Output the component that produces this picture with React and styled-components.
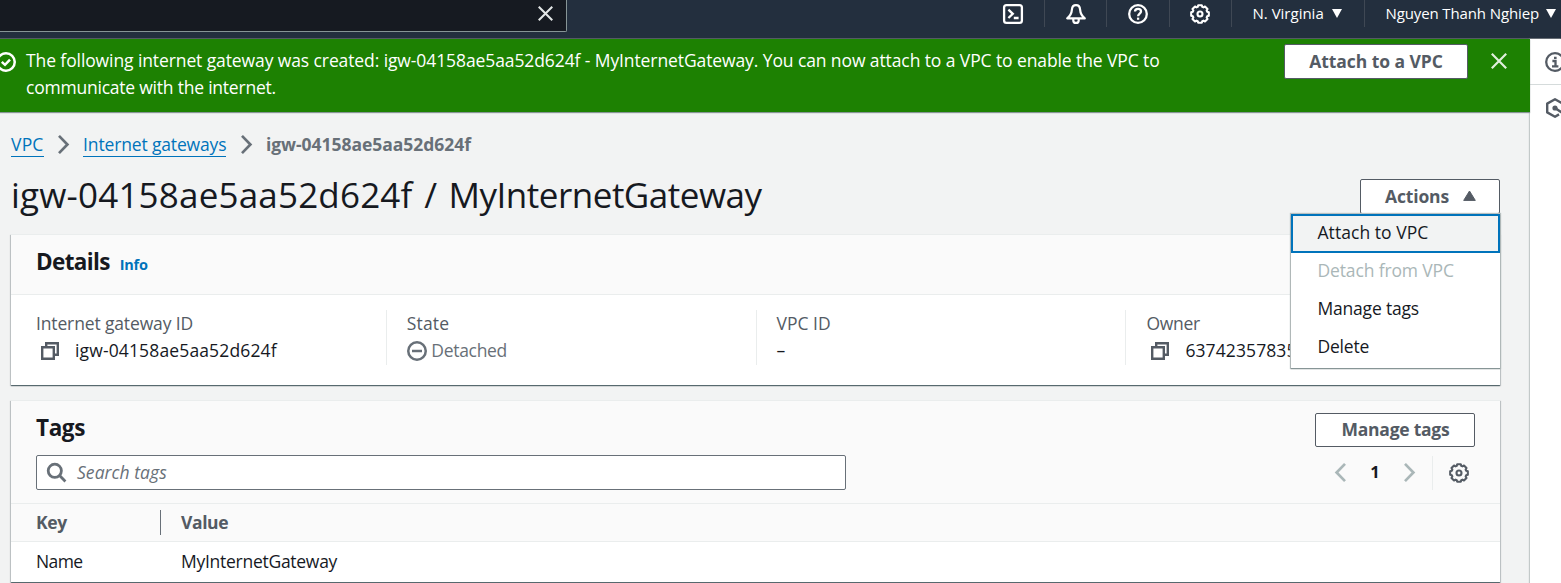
import React from "react";
import styled, { createGlobalStyle } from "styled-components";

const ink = "#16191f";
const muted = "#545b64";
const soft = "#687078";
const line = "#eaeded";
const link = "#0073bb";

const GlobalStyle = createGlobalStyle`
  * { box-sizing: border-box; }
  body {
    margin: 0;
    overflow: hidden;
    background: #f2f3f3;
    color: ${ink};
    font: 400 17.5px/27.5px "Open Sans", "Noto Sans", sans-serif;
  }
  button { font: inherit; margin: 0; cursor: pointer; }
  svg { display: block; flex: none; overflow: visible; }
`;

/* letter-spacing tuned per label */
const Text = styled.span`
  letter-spacing: ${(p) => p.$track || 0}px;
  white-space: nowrap;
`;

/* ---------- icons ---------- */

const gearOutline = (() => {
  const pts = [];
  const teeth = 8;
  for (let i = 0; i < teeth; i++) {
    const base = (i * 2 * Math.PI) / teeth - Math.PI / 2;
    [[-0.2, 9], [0.2, 9], [0.31, 7.5], [0.475, 7.5]].forEach(([a, r]) => {
      pts.push(`${(10 + r * Math.cos(base + a)).toFixed(2)} ${(10 + r * Math.sin(base + a)).toFixed(2)}`);
    });
  }
  return `M${pts.join("L")}Z`;
})();

const Svg = ({ size = 20, w = 2.5, children, ...rest }) => (
  <svg width={size} height={size} viewBox="0 0 20 20" fill="none" stroke="currentColor" strokeWidth={w} {...rest}>
    {children}
  </svg>
);
const GearIcon = () => (
  <Svg w={2.1} strokeLinejoin="round">
    <path d={gearOutline} />
    <circle cx="10" cy="10" r="2.5" />
  </Svg>
);
const ShellIcon = () => (
  <Svg w={2.3}>
    <rect x="1.1" y="1.1" width="17.8" height="17.8" rx="2.4" />
    <path d="M5.4 5.6L9.8 9.8L5.4 14M10.8 14H15.6" />
  </Svg>
);
const BellIcon = () => (
  <Svg w={2.2} strokeLinejoin="round">
    <path d="M10 1.2C7.6 1.2 6.1 3 5.9 5.6C5.6 9.6 4.2 12 1.2 14.4H18.8C15.8 12 14.4 9.6 14.1 5.6C13.9 3 12.4 1.2 10 1.2Z" />
    <path d="M7.3 15V16.4C7.3 18 8.4 18.9 10 18.9S12.7 18 12.7 16.4V15" />
  </Svg>
);
const HelpIcon = () => (
  <Svg w={2.3}>
    <circle cx="10" cy="10" r="8.8" />
    <path d="M7 7.6C7 5.8 8.3 4.9 10 4.9S13 5.9 13 7.4C13 9.5 10.1 9.6 10.1 12.2" />
    <path d="M10.1 13.6V15.8" />
  </Svg>
);
const CloseIcon = ({ size = 16 }) => (
  <svg width={size} height={size} viewBox="0 0 16 16" fill="none" stroke="currentColor" strokeWidth="2.2">
    <path d="M.8 .8L15.2 15.2M15.2 .8L.8 15.2" />
  </svg>
);
const CheckCircleIcon = () => (
  <Svg>
    <circle cx="10" cy="10" r="8.75" />
    <path d="M5.8 9.8L9 12.8L14 7.6" />
  </Svg>
);
const MinusCircleIcon = () => (
  <Svg w={2.5}>
    <circle cx="10" cy="10" r="8.75" />
    <path d="M5 10H15" />
  </Svg>
);
const CopyIcon = () => (
  <svg width="18" height="18" viewBox="0 0 18 18" fill="none" stroke="currentColor" strokeWidth="2.4">
    <path d="M1.2 5.2H12.8V16.8H1.2Z" />
    <path d="M5.2 5V1.2H16.8V12.8H13" />
  </svg>
);
const Chevron = ({ flip }) => (
  <svg width="11" height="19" viewBox="0 0 11 19" fill="none" stroke="currentColor" strokeWidth="2.7">
    <path d={flip ? "M10 .9L1.6 9.5L10 18.1" : "M1 .9L9.4 9.5L1 18.1"} />
  </svg>
);
const SearchIcon = () => (
  <Svg w={2.8}>
    <circle cx="7.8" cy="7.8" r="6.6" />
    <path d="M12.6 12.6L18.4 18.4" />
  </Svg>
);
const InfoIcon = () => (
  <Svg w={2.3}>
    <circle cx="10" cy="10" r="8.8" />
    <path d="M9 5.9H11.6M7.4 9H10.5V14.6M7 14.4H13.4" />
  </Svg>
);
const HexIcon = () => (
  <Svg w={2.4} strokeLinejoin="round">
    <path d="M17.6 12V5.6L10 1.3L2.2 5.6V14.4L10 18.7L14 16.4" />
    <circle cx="10" cy="10" r="1.4" fill="currentColor" />
    <path d="M10 10L17 14.6" />
  </Svg>
);
const DownTriangle = () => (
  <svg width="10" height="9" viewBox="0 0 10 9" fill="currentColor"><path d="M0 0H10L5 9Z" /></svg>
);
const UpTriangle = () => (
  <svg width="13" height="11" viewBox="0 0 13 11" fill="currentColor" stroke="currentColor" strokeLinejoin="round"><path d="M6.5 1L12.3 10.4H.7Z" /></svg>
);

/* ---------- top navigation ---------- */

const TopNav = styled.header`
  display: flex;
  align-items: flex-start;
  justify-content: space-between;
  height: 39px;
  background: #232f3e;
  border-bottom: 1px solid #545b64;
  color: #fff;
`;
const NavSearch = styled.div`
  display: flex;
  justify-content: flex-end;
  width: 567px;
  height: 32px;
  padding: 6px 13px 0 0;
  background: #161a21;
  border: solid #879596;
  border-width: 0 1px 1px 0;
  border-radius: 0 0 2px 0;
  color: #e3e6e6;
`;
const NavItems = styled.div`
  display: flex;
  height: 27px;
  font-size: 15px;
  font-weight: 500;
`;
const NavCell = styled.div`
  display: flex;
  align-items: center;
  justify-content: ${(p) => (p.$icon ? "center" : "flex-start")};
  gap: ${(p) => (p.$last ? 7 : 8)}px;
  width: ${(p) => p.$w}px;
  padding-left: ${(p) => (p.$icon ? 0 : 20.5)}px;
  border-right: ${(p) => (p.$last ? 0 : 1)}px solid #3f4854;
  white-space: nowrap;
`;

/* ---------- page frame ---------- */

const Frame = styled.div`
  display: grid;
  grid-template-columns: 1530px 31px;
  height: 544px;
`;
const Main = styled.main`
  min-width: 0;
  height: 544px;
  background: #f2f3f3;
`;
const SidePanel = styled.aside`
  height: 544px;
  overflow: hidden;
  background: #fff;
  box-shadow: -1px 0 1px #c3c9c9;
  color: ${muted};
`;
const SideTool = styled.div`
  display: flex;
  align-items: center;
  height: 46px;
  padding-left: 15px;
  border-bottom: ${(p) => (p.$ruled ? 1 : 0)}px solid #d5dbdb;
`;

const Banner = styled.div`
  display: flex;
  align-items: flex-start;
  position: relative;
  height: 73px;
  background: #1d8102;
  box-shadow: 0 1px 1px #879596;
  color: #fff;
  font-weight: 500;
`;
const BannerIcon = styled.div`
  margin: 13px 10px 0 -4px;
`;
const BannerText = styled.div`
  display: flex;
  flex-direction: column;
  width: 1257.5px;
  padding-top: 8px;
  line-height: 27px;
`;
const BannerClose = styled.div`
  margin: 14px 0 0 23.5px;
  color: #e0efdc;
`;

const Button = styled.button`
  display: flex;
  align-items: center;
  justify-content: center;
  gap: 14px;
  width: ${(p) => p.$w}px;
  height: ${(p) => p.$h || 34}px;
  margin-top: ${(p) => p.$mt || 0}px;
  padding: 0 0 2px 1px;
  background: #fff;
  border: 1px solid ${muted};
  border-radius: 2px;
  color: ${muted};
  font-weight: 700;
  line-height: 20px;
`;

const Content = styled.div`
  padding: 19px 30px 0 11px;
`;
const Breadcrumbs = styled.nav`
  display: flex;
  align-items: center;
  height: 27px;
  color: ${soft};
`;
const Crumb = styled.a`
  height: 25px;
  margin-bottom: 1px;
  line-height: 25px;
  border-bottom: 1px solid ${link};
  color: ${link};
`;
const CrumbGap = styled.span`
  display: flex;
  justify-content: center;
  width: 39.5px;
`;
const TitleRow = styled.div`
  display: flex;
  justify-content: space-between;
  height: 76px;
  padding-top: 21px;
`;
const Title = styled.h1`
  margin: -6px 0 0;
  font-size: 35px;
  font-weight: 400;
  line-height: 44px;
  word-spacing: 2.5px;
  white-space: pre;
`;

const ActionsWrap = styled.div`
  position: relative;
`;
const Menu = styled.div`
  position: absolute;
  z-index: 2;
  top: 35px;
  right: 0;
  width: 209px;
  height: 154px;
  background: #fff;
  box-shadow: 0 1px 1px #879596, 0 0 1px 1px #b9c0c0;
`;
const MenuItem = styled.div`
  display: flex;
  align-items: center;
  height: ${(p) => (p.$active ? 39 : 38)}px;
  margin-bottom: ${(p) => (p.$active ? -1 : 0)}px;
  padding: ${(p) => (p.$active ? "0 0 1px 24.5px" : "0 0 0 26.5px")};
  background: ${(p) => (p.$active ? "#f2f3f3" : "transparent")};
  border: ${(p) => (p.$active ? `2px solid ${link}` : 0)};
  color: ${(p) => (p.$disabled ? "#aab7b8" : ink)};
`;

const Card = styled.section`
  width: 1489px;
  background: #fff;
  border-top: 1px solid ${line};
  box-shadow: 0 1px 1px 0 rgba(0, 28, 36, 0.5), 1px 1px 1px 0 rgba(0, 28, 36, 0.15),
    -1px 1px 1px 0 rgba(0, 28, 36, 0.15);
`;
const CardHeader = styled.div`
  display: flex;
  align-items: baseline;
  gap: 10px;
  height: 60px;
  padding: 13px 25px 0;
  background: #fafafa;
  border-bottom: 1px solid ${line};
`;
const Heading = styled.h2`
  margin: ${(p) => p.$mt || 0}px 0 0;
  font-size: 22.5px;
  font-weight: 700;
  line-height: 28px;
`;
const InfoLink = styled.a`
  color: ${link};
  font-size: 14.5px;
  font-weight: 700;
`;
const Fields = styled.div`
  display: grid;
  grid-template-columns: repeat(4, 369.8px);
  height: 90px;
  padding: 15px 0 20px 5px;
  overflow: hidden;
`;
const Field = styled.div`
  padding-left: ${(p) => (p.$first ? 19 : 20)}px;
  border-left: 1px solid ${(p) => (p.$first ? "transparent" : line)};
`;
const FieldLabel = styled.div`
  color: ${muted};
`;
const FieldValue = styled.div`
  display: flex;
  align-items: center;
  gap: ${(p) => (p.$copy ? 16 : 4.5)}px;
  height: 27px;
  padding-left: ${(p) => (p.$copy ? 5 : 0)}px;
  color: ${(p) => (p.$muted ? soft : ink)};
`;
const CopySlot = styled.span`
  color: ${muted};
`;

const TagsTop = styled.div`
  display: flex;
  justify-content: space-between;
  height: 54px;
  padding: 12px 25px 0;
  background: #fafafa;
`;
const TagsTools = styled.div`
  display: flex;
  justify-content: space-between;
  height: 49px;
  padding: 0 31px 0 25px;
  background: #fafafa;
  border-bottom: 1px solid ${line};
`;
const SearchBox = styled.div`
  display: flex;
  align-items: center;
  gap: 10px;
  width: 810px;
  height: 35px;
  padding-left: 10px;
  background: #fff;
  border: 1px solid ${soft};
  border-radius: 2px;
  color: ${soft};
  font-style: italic;
`;
const Pager = styled.div`
  display: flex;
  align-items: center;
  height: 35px;
  color: #aab7b8;
`;
const PageNumber = styled.span`
  width: 58px;
  padding-bottom: 2px;
  color: ${ink};
  font-size: 16.5px;
  font-weight: 700;
  text-align: center;
`;
const PagerSettings = styled.div`
  display: flex;
  align-items: center;
  height: 34px;
  margin-left: 17px;
  padding-left: 16px;
  border-left: 1px solid ${line};
  color: ${muted};
`;
const TableRow = styled.div`
  display: grid;
  grid-template-columns: 150px 1fr;
  align-items: center;
  height: ${(p) => (p.$head ? 38 : 40)}px;
  padding-bottom: ${(p) => (p.$head ? 0 : 2)}px;
  background: ${(p) => (p.$head ? "#fafafa" : "#fff")};
  border-bottom: ${(p) => (p.$head ? 1 : 0)}px solid ${line};
  color: ${(p) => (p.$head ? muted : ink)};
  font-weight: ${(p) => (p.$head ? 700 : 400)};
`;
const Cell = styled.div`
  height: 25px;
  padding-left: ${(p) => (p.$key ? 25 : 20)}px;
  border-right: ${(p) => (p.$ruled ? 1 : 0)}px solid ${soft};
  line-height: 25px;
`;
const Spacer = styled.div`
  height: 15px;
`;

export default function App() {
  return (
    <>
      <GlobalStyle />
      <TopNav>
        <NavSearch><CloseIcon size={15} /></NavSearch>
        <NavItems>
          <NavCell $icon $w={62.4}><ShellIcon /></NavCell>
          <NavCell $icon $w={62.4}><BellIcon /></NavCell>
          <NavCell $icon $w={62.4}><HelpIcon /></NavCell>
          <NavCell $icon $w={62.4}><GearIcon /></NavCell>
          <NavCell $w={133}><Text>N. Virginia</Text><DownTriangle /></NavCell>
          <NavCell $w={196} $last><Text $track={-0.12}>Nguyen Thanh Nghiep</Text><DownTriangle /></NavCell>
        </NavItems>
      </TopNav>
      <Frame>
        <Main>
          <Banner>
            <BannerIcon><CheckCircleIcon /></BannerIcon>
            <BannerText>
              <Text $track={-0.1}>
                The following internet gateway was created: igw-04158ae5aa52d624f - MyInternetGateway. You can now attach to a VPC to enable the VPC to
              </Text>
              <Text $track={-0.22}>communicate with the internet.</Text>
            </BannerText>
            <Button $w={184} $h={35} $mt={5}><Text $track={-0.05}>Attach to a VPC</Text></Button>
            <BannerClose><CloseIcon /></BannerClose>
          </Banner>
          <Content>
            <Breadcrumbs>
              <Crumb><Text $track={0.2}>VPC</Text></Crumb>
              <CrumbGap><Chevron /></CrumbGap>
              <Crumb><Text $track={-0.15}>Internet gateways</Text></Crumb>
              <CrumbGap><Chevron /></CrumbGap>
              <Text as="strong" $track={-0.04}>igw-04158ae5aa52d624f</Text>
            </Breadcrumbs>
            <TitleRow>
              <Title>
                <Text $track={0.19}>igw-04158ae5aa52d624f</Text>
                {" / "}
                <Text $track={-0.5}>MyInternetGateway</Text>
              </Title>
              <ActionsWrap>
                <Button $w={140} $h={35}><Text $track={-0.14}>Actions</Text><UpTriangle /></Button>
                <Menu>
                  <MenuItem $active><Text $track={0.05}>Attach to VPC</Text></MenuItem>
                  <MenuItem $disabled><Text $track={-0.14}>Detach from VPC</Text></MenuItem>
                  <MenuItem><Text $track={-0.2}>Manage tags</Text></MenuItem>
                  <MenuItem><Text $track={-0.2}>Delete</Text></MenuItem>
                </Menu>
              </ActionsWrap>
            </TitleRow>
            <Card>
              <CardHeader>
                <Heading><Text $track={-0.65}>Details</Text></Heading>
                <InfoLink><Text $track={-0.2}>Info</Text></InfoLink>
              </CardHeader>
              <Fields>
                <Field $first>
                  <FieldLabel><Text $track={-0.14}>Internet gateway ID</Text></FieldLabel>
                  <FieldValue $copy><CopySlot><CopyIcon /></CopySlot><Text $track={0.14}>igw-04158ae5aa52d624f</Text></FieldValue>
                </Field>
                <Field>
                  <FieldLabel><Text $track={0.15}>State</Text></FieldLabel>
                  <FieldValue $muted><MinusCircleIcon /><Text $track={-0.3}>Detached</Text></FieldValue>
                </Field>
                <Field>
                  <FieldLabel><Text>VPC ID</Text></FieldLabel>
                  <FieldValue>–</FieldValue>
                </Field>
                <Field>
                  <FieldLabel><Text $track={-0.3}>Owner</Text></FieldLabel>
                  <FieldValue $copy><CopySlot><CopyIcon /></CopySlot><Text $track={0.1}>63742357835</Text></FieldValue>
                </Field>
              </Fields>
            </Card>
            <Spacer />
            <Card>
              <TagsTop>
                <Heading $mt={1}><Text $track={-0.4}>Tags</Text></Heading>
                <Button $w={160}><Text $track={-0.25}>Manage tags</Text></Button>
              </TagsTop>
              <TagsTools>
                <SearchBox><SearchIcon /><Text $track={0.05}>Search tags</Text></SearchBox>
                <Pager>
                  <Chevron flip />
                  <PageNumber>1</PageNumber>
                  <Chevron />
                  <PagerSettings><GearIcon /></PagerSettings>
                </Pager>
              </TagsTools>
              <TableRow $head>
                <Cell $key $ruled><Text $track={-0.4}>Key</Text></Cell>
                <Cell><Text $track={-0.4}>Value</Text></Cell>
              </TableRow>
              <TableRow>
                <Cell $key><Text $track={-0.6}>Name</Text></Cell>
                <Cell><Text $track={-0.27}>MyInternetGateway</Text></Cell>
              </TableRow>
            </Card>
          </Content>
        </Main>
        <SidePanel>
          <SideTool $ruled><InfoIcon /></SideTool>
          <SideTool><HexIcon /></SideTool>
        </SidePanel>
      </Frame>
    </>
  );
}
